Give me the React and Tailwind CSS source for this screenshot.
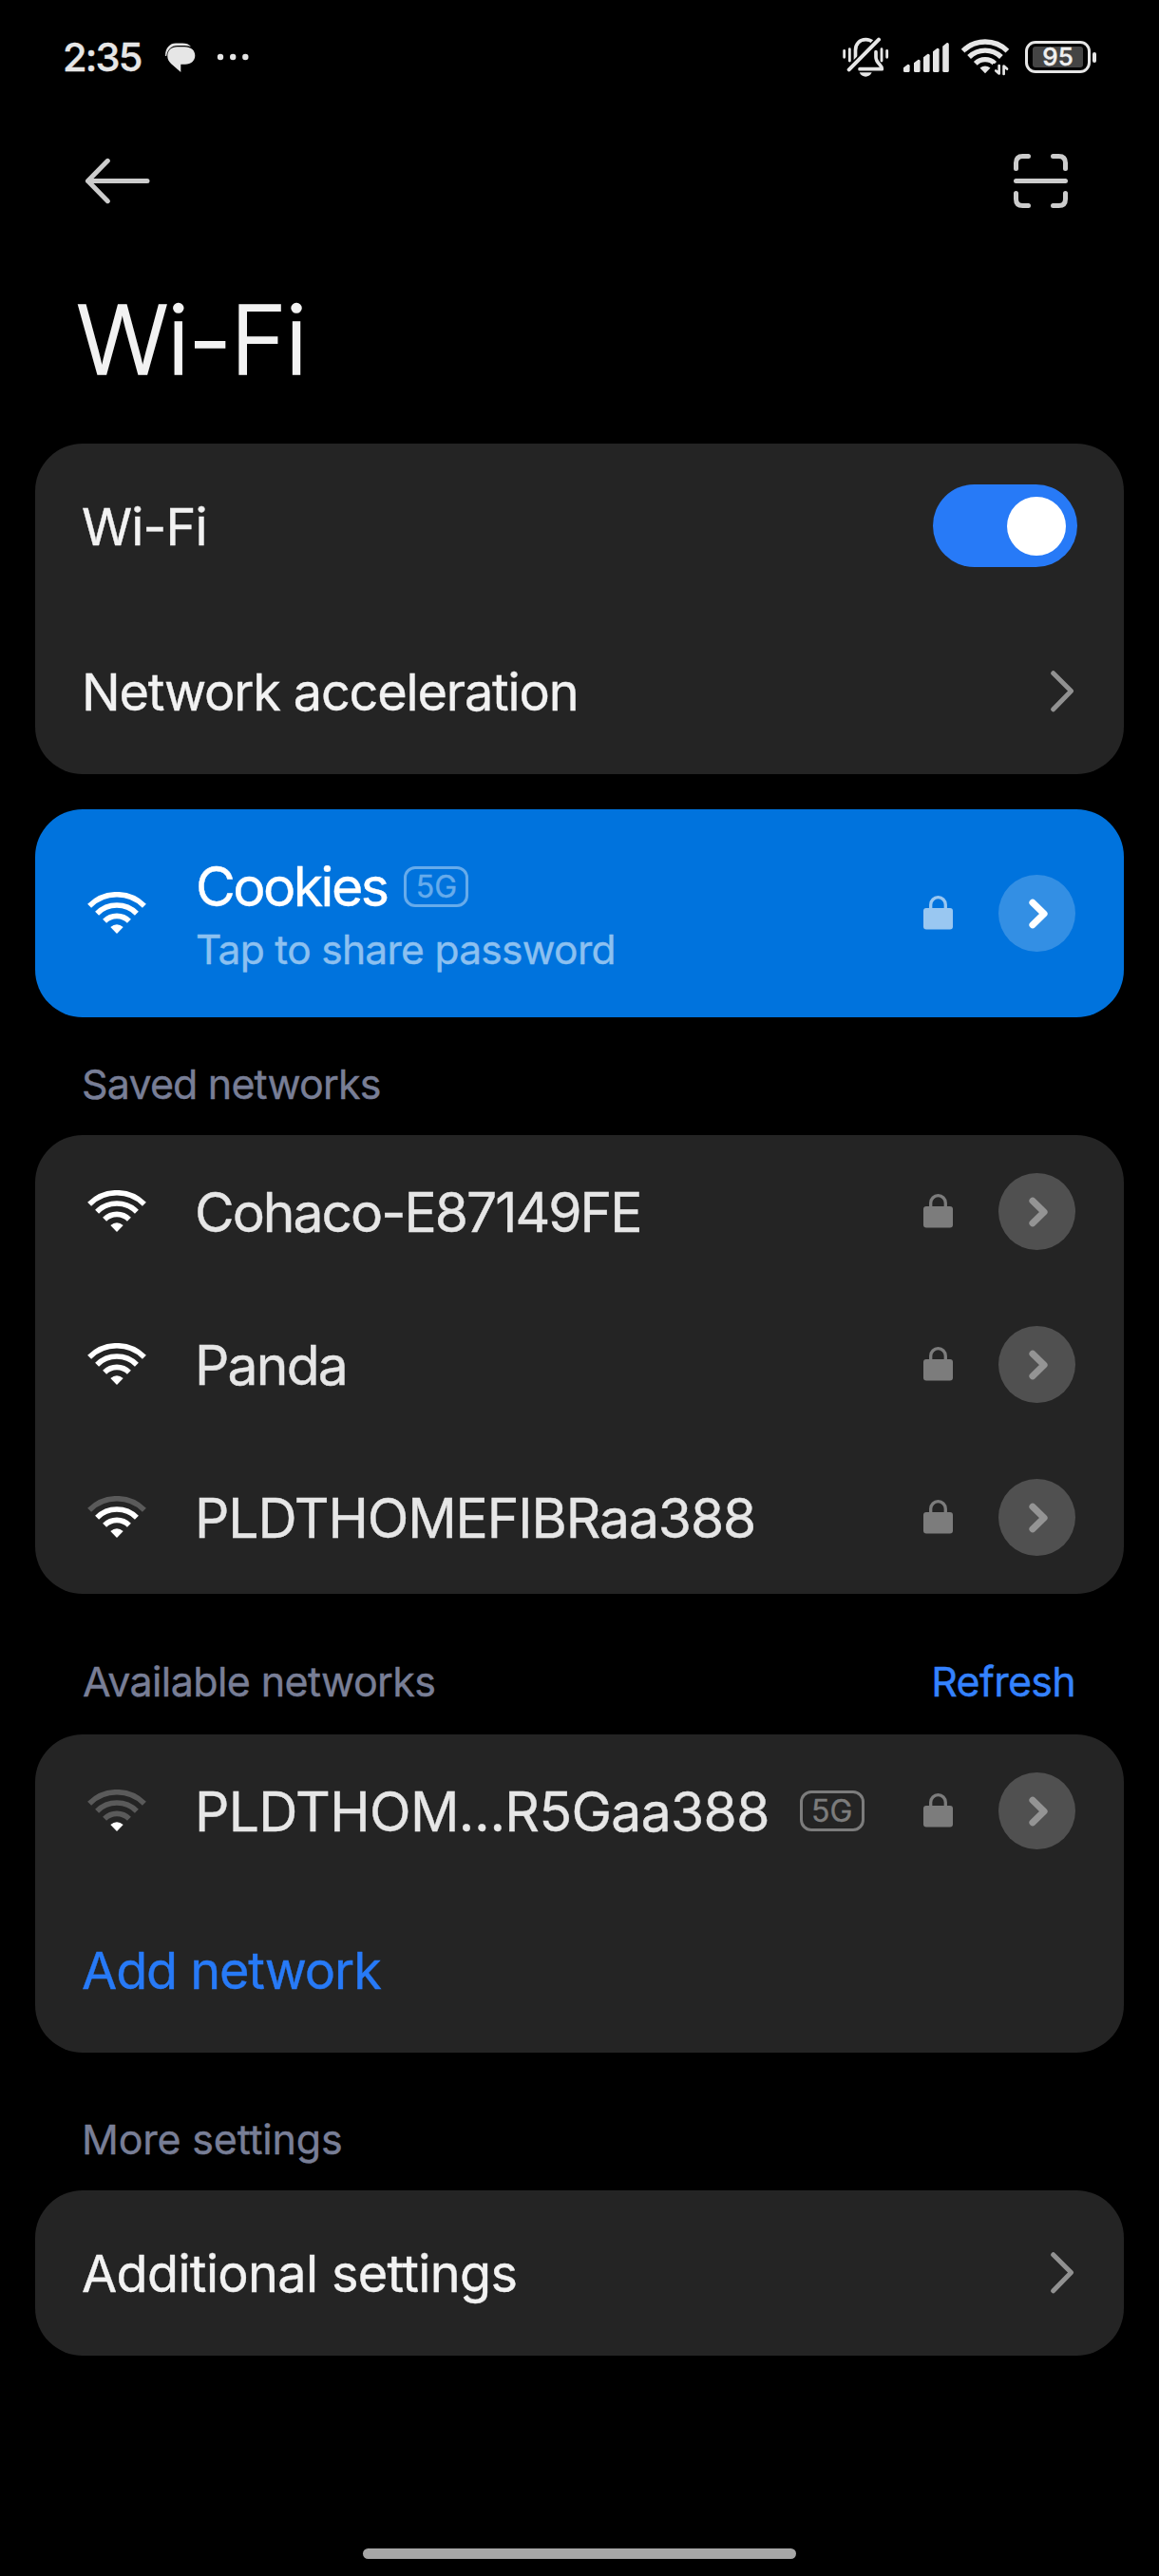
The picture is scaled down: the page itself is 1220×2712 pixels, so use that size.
import React from 'react';

const FONT = "font-['Inter','Noto_Sans',sans-serif]";

function MutedBell() {
  return (
    <svg width="49" height="43" viewBox="82 58 147 129" fill="none" stroke="#e6e6e6" strokeLinecap="round" strokeLinejoin="round">
      <path d="M122.500 130V100C122.500 79 136 66 155 66C164 66 172 69 178 75" strokeWidth="11" />
      <path d="M187 105V122C187 132 191 137 199 145C204 150 206 153 206 159H136" strokeWidth="11" />
      <path d="M103 160L196 66" stroke="#000" strokeWidth="22" strokeLinecap="butt" />
      <path d="M102 161L196 66" strokeWidth="12" />
      <path d="M87 101V122M104 96V133M205 96V133M222 101V122" strokeWidth="8.500" />
      <path d="M135 170H174C170 179 163 183 154.500 183C146 183 139 179 135 170Z" fill="#e6e6e6" stroke="none" />
    </svg>
  );
}

function SignalBars() {
  const bars = [[0, 8.7], [11, 13.7], [21, 19.7], [31, 25.7], [41.2, 31.3]];
  return (
    <svg width="48" height="32" viewBox="0 0 48 32" fill="#e6e6e6">
      {bars.map(([x, h]) => (
        <path key={x} d={`M${x} ${32 - h + 4}L${x + 4.6} ${32 - h + 0.4}Q${x + 6.6} ${32 - h} ${x + 6.6} ${32 - h + 2}V30.500Q${x + 6.6} 32 ${x + 5} 32H${x + 1.5}Q${x} 32 ${x} 30.500Z`} />
      ))}
    </svg>
  );
}

function StatusWifi() {
  return (
    <svg width="51" height="39" viewBox="0 0 51 39">
      <g fill="none" stroke="#e6e6e6" strokeWidth="5.4">
        <path d="M1.600 12.600A33.500 33.500 0 0 1 48.400 12.600" />
        <path d="M8.100 19A24.300 24.300 0 0 1 41.900 19" />
        <path d="M14.800 25.800A14.500 14.500 0 0 1 35.200 25.800" />
      </g>
      <path d="M19.500 30.500Q25 26.500 30.500 30.500L25 36.300Z" fill="#e6e6e6" />
      <path d="M33 26H51V39H33Z" fill="#000" />
      <path d="M39.700 28V36.500L36.300 33.500M44.600 37V28.500L48 31.500" fill="none" stroke="#e6e6e6" strokeWidth="2.700" strokeLinejoin="round" strokeLinecap="round" />
    </svg>
  );
}

function Wifi({ level }) {
  const dim = '#5a5a5a';
  return (
    <svg width="62" height="45" viewBox="0 0 62 45" className="shrink-0">
      <g fill="none" strokeWidth="5.600">
        <path d="M2.100 14.700A40.900 40.900 0 0 1 59.900 14.700" stroke={level > 3 ? '#fff' : dim} />
        <path d="M10.100 22.700A29.600 29.600 0 0 1 51.900 22.700" stroke={level > 2 ? '#fff' : dim} />
        <path d="M18.100 30.700A18.200 18.200 0 0 1 43.900 30.700" stroke={level > 1 ? '#fff' : dim} />
      </g>
      <path d="M24.300 37Q31 31.700 37.700 37L31 44Z" fill="#fff" />
    </svg>
  );
}

function Lock({ color }) {
  return (
    <svg width="31" height="36" viewBox="0 0 31 36" className="mb-[2px] shrink-0">
      <path d="M7.700 14V9.500A7.800 7.800 0 0 1 23.300 9.500V14" fill="none" stroke={color} strokeWidth="3.300" />
      <rect y="13" width="31" height="22.500" rx="3" fill={color} />
    </svg>
  );
}

function RoundArrow({ active }) {
  return (
    <div className={active ? 'flex size-[81px] shrink-0 items-center justify-center rounded-full bg-[#338fe4]' : 'flex size-[81px] shrink-0 items-center justify-center rounded-full bg-[#505050]'}>
      <svg width="20" height="32" viewBox="0 0 20 32" fill="none" stroke={active ? '#fff' : '#949494'} strokeWidth="7.200" strokeLinecap="round" strokeLinejoin="round" className="ml-[2px]">
        <path d="M4 4.200L16 16L4 27.800" />
      </svg>
    </div>
  );
}

function Chevron() {
  return (
    <svg width="25" height="44" viewBox="0 0 25 44" fill="none" stroke="#919191" strokeWidth="5" strokeLinecap="round" strokeLinejoin="round" className="mr-[3px]">
      <path d="M2.700 2.700L21.500 21.500L2.700 40.800" />
    </svg>
  );
}

function Band({ active }) {
  return (
    <span className={active
      ? 'flex h-[43px] w-[68px] items-center justify-center rounded-[12px] border-[3px] border-[#66abeb] text-[32px] leading-none text-[#66abeb]'
      : 'flex h-[43px] w-[68px] items-center justify-center rounded-[12px] border-[3px] border-[#7c7c7c] text-[32px] leading-none text-[#7c7c7c]'}>
      5G
    </span>
  );
}

function NetworkRow({ name, level, tracking, band }) {
  return (
    <div className="flex h-[161px] items-center pr-[51px] pl-[55px]">
      <Wifi level={level} />
      <div className="ml-[51px] flex flex-1 items-center">
        <span className={`pt-[2px] text-[57px] leading-none whitespace-nowrap text-[#e6e6e6] ${tracking}`}>{name}</span>
        {band && <div className="ml-[32px]"><Band /></div>}
      </div>
      <Lock color="#7c7c7c" />
      <div className="ml-[48px]"><RoundArrow /></div>
    </div>
  );
}

function Card({ children }) {
  return <section className="mx-[37px] shrink-0 overflow-hidden rounded-[50px] bg-[#242424]">{children}</section>;
}

function Row({ children }) {
  return <div className="flex h-[174px] items-center justify-between pr-[49px] pl-[49px] text-[54px] leading-none text-[#f2f2f2]">{children}</div>;
}

export default function App() {
  return (
    <div className={`flex h-[2712px] w-[1220px] flex-col bg-black [-webkit-text-stroke:0.4px_currentColor] ${FONT}`}>
      <header className="flex h-[120px] shrink-0 items-center justify-between pr-[66px] pl-[66px]">
        <div className="flex items-center">
          <span className="pt-[1px] text-[41.500px] leading-none font-medium tracking-[-1.800px] text-[#e6e6e6]">2:35</span>
          <svg width="32" height="32" viewBox="0 0 32 32" fill="#e6e6e6" className="mt-[2px] ml-[25px]">
            <path d="M0 14C0 5 5 0.500 11 0.500H18C22 0.500 25 1.500 27 4.300C24 3 21 3 18 3H13C6 3 2.500 7 1.200 14Z" />
            <path d="M12.500 4.300H20C27 4.300 31.300 8 31.300 13.500C31.300 19 27 22.800 21 22.800H16.300V31L6 22C3.500 19.500 2.300 17 2.300 14C2.300 8 6.500 4.300 12.500 4.300Z" />
          </svg>
          <svg width="34" height="8" viewBox="0 0 34 8" fill="#e6e6e6" className="ml-[22px]">
            <circle cx="4" cy="4" r="3.200" /><circle cx="17.200" cy="4" r="3.200" /><circle cx="30.300" cy="4" r="3.200" />
          </svg>
        </div>
        <div className="flex items-center">
          <MutedBell />
          <div className="ml-[15px]"><SignalBars /></div>
          <div className="ml-[13px]"><StatusWifi /></div>
          <div className="ml-[16px] flex h-[34px] w-[69px] items-center justify-center rounded-[11px] border-[3.300px] border-[#e6e6e6]">
            <div className="flex h-[22px] w-[53px] items-center justify-center rounded-[3px] bg-[#444]">
              <span className="text-[26px] leading-none font-medium text-[#f0f0f0]">95</span>
            </div>
          </div>
          <div className="ml-[2px] h-[11px] w-[4px] rounded-full bg-[#e6e6e6]" />
        </div>
      </header>
      <nav className="flex h-[141px] shrink-0 items-center justify-between pr-[96px] pl-[89px]">
        <svg width="70" height="49" viewBox="0 0 70 49" fill="none" stroke="#ccc" strokeWidth="5" strokeLinecap="round" strokeLinejoin="round">
          <path d="M24.300 3.300L3.500 24.500L24.300 45.700M3.500 24.500H66" />
        </svg>
        <svg width="57" height="57" viewBox="0 0 57 57" fill="none" stroke="#ccc" strokeWidth="5" strokeLinecap="round">
          <path d="M2.500 15.500V9.500Q2.500 2.500 9.500 2.500H15.500M41.500 2.500H47.500Q54.500 2.500 54.500 9.500V15.500M54.500 41.500V47.500Q54.500 54.500 47.500 54.500H41.500M15.500 54.500H9.500Q2.500 54.500 2.500 47.500V41.500M2.500 28.500H54.500" />
        </svg>
      </nav>
      <h1 className="h-[206px] shrink-0 pt-[46px] pl-[80px] text-[101px] leading-none font-light tracking-[-1.500px] text-[#f2f2f2] [-webkit-text-stroke:1.600px_#f2f2f2]">Wi-Fi</h1>

      <Card>
        <Row>
          <span className="pt-[2px] tracking-[-0.9px]">Wi-Fi</span>
          <div className="mb-[1px] flex h-[87px] w-[152px] items-center justify-end rounded-full bg-[#277af7] pr-[12px]">
            <div className="size-[62px] rounded-full bg-white" />
          </div>
        </Row>
        <Row><span className="pt-[2px] tracking-[-1.180px]">Network acceleration</span><Chevron /></Row>
      </Card>

      <section className="mx-[37px] mt-[37px] flex h-[219px] shrink-0 items-center rounded-[50px] bg-[#0073dd] pr-[51px] pl-[55px]">
        <Wifi level={4} />
        <div className="ml-[52px] flex-1 pt-[5px]">
          <div className="flex h-[70px] items-center">
            <span className="text-[57.300px] leading-none tracking-[-2.600px] text-white">Cookies</span>
            <div className="ml-[18px]"><Band active /></div>
          </div>
          <div className="text-[42.500px] leading-[61px] tracking-[-0.7px] text-[#8cc0f0]">Tap to share password</div>
        </div>
        <Lock color="#99c7f1" />
        <div className="ml-[48px]"><RoundArrow active /></div>
      </section>

      <div className="flex h-[124px] shrink-0 items-center pt-[16px] pl-[86px] text-[43px] leading-none tracking-[-0.850px] text-[#787e96]">Saved networks</div>
      <Card>
        <NetworkRow name="Cohaco-E87149FE" level={4} tracking="tracking-[-2px]" />
        <NetworkRow name="Panda" level={4} tracking="tracking-[-1.8px]" />
        <NetworkRow name="PLDTHOMEFIBRaa388" level={3} tracking="tracking-[-1.100px]" />
      </Card>

      <div className="flex h-[148px] shrink-0 items-center justify-between pt-[37px] pr-[88px] pl-[87px] text-[43px] leading-none">
        <span className="tracking-[-0.6px] text-[#787e96]">Available networks</span>
        <span className="tracking-[-0.7px] text-[#3482ff]">Refresh</span>
      </div>
      <Card>
        <NetworkRow name="PLDTHOM…R5Gaa388" level={1} tracking="tracking-[-0.65px]" band />
        <Row><span className="pt-[2px] tracking-[-1.1px] text-[#277af7]">Add network</span></Row>
      </Card>

      <div className="flex h-[145px] shrink-0 items-center pt-[37px] pl-[86px] text-[43px] leading-none tracking-[-0.2px] text-[#787e96]">More settings</div>
      <Card>
        <Row><span className="pt-[2px] tracking-[-0.65px]">Additional settings</span><Chevron /></Row>
      </Card>

      <div className="mx-auto mt-auto mb-[18px] h-[11px] w-[456px] shrink-0 rounded-full bg-[#a6a6a6]" />
    </div>
  );
}
